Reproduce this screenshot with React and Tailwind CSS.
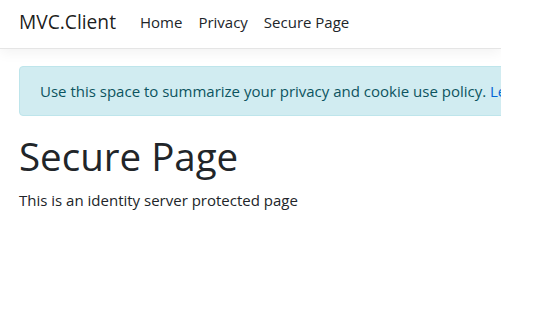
export default function App() {
  return (
    <div className="w-[543px] h-[336px] bg-white overflow-hidden">
      <div className="w-[501px] h-full overflow-hidden font-['Open_Sans',sans-serif]">
        <nav className="h-[49px] border-b border-[#e5e5e5] shadow-[0_4px_12px_rgba(0,0,0,0.05)] flex items-center pb-[4px] pl-[19px] bg-white">
          <a className="text-[19.2px] text-black/90 mr-[24px] leading-none">MVC.Client</a>
          <ul className="flex items-center gap-[16px] text-[15px] text-[#212529] leading-none">
            <li>Home</li>
            <li>Privacy</li>
            <li>Secure Page</li>
          </ul>
        </nav>

        <main className="pl-[19px] pt-[17px]">
          <div className="w-[640px] h-[50px] flex items-center px-[20px] bg-[#d1ecf1] border border-[#bee5eb] rounded-[4px] text-[#0c5460] text-[15px] whitespace-nowrap">
            Use this space to summarize your privacy and cookie use policy.&nbsp;
            <a className="text-[#0366d6]">Learn More</a>
          </div>

          <h1 className="mt-[17px] text-[38.5px] leading-[1.2] text-[#212529] font-medium">Secure Page</h1>
          <p className="mt-[9px] text-[15px] leading-[24px] text-[#212529]">
            This is an identity server protected page
          </p>
        </main>
      </div>
    </div>
  );
}
